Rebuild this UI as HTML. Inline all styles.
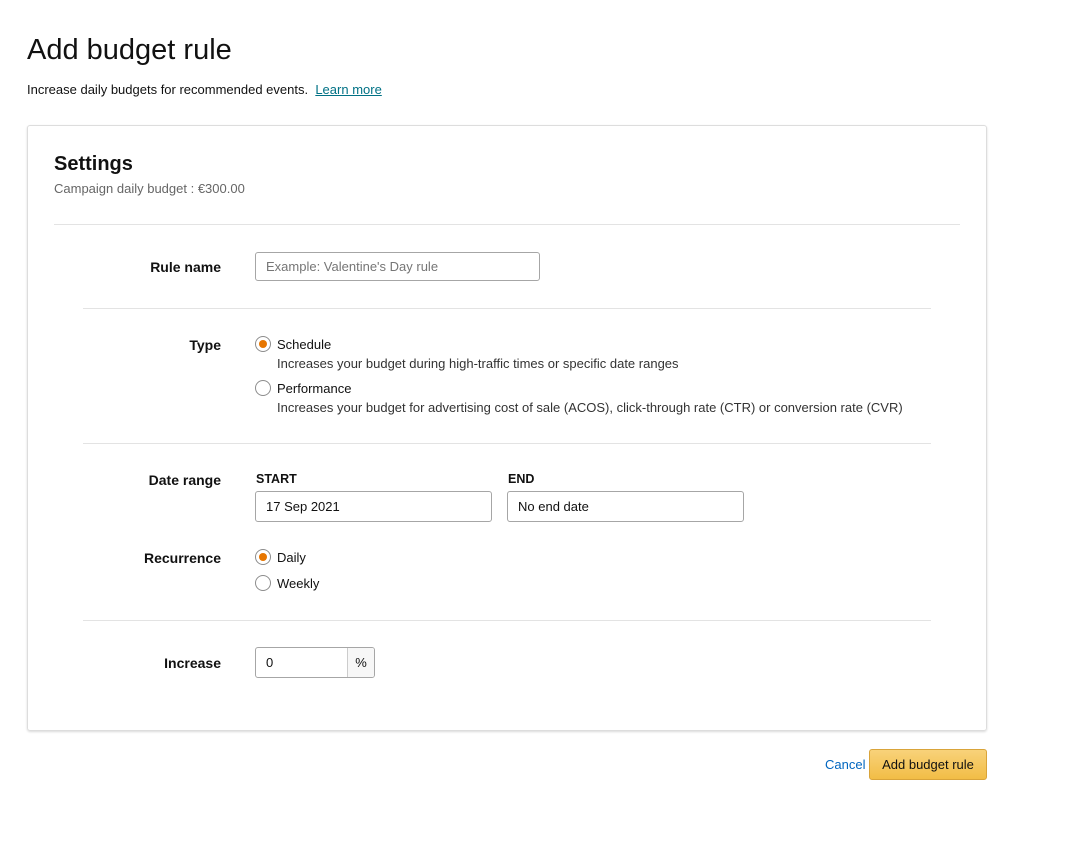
<!DOCTYPE html>
<html><head><style>
body{margin:0;width:1079px;height:858px;background:#fff;font-family:"Liberation Sans",sans-serif;color:#111;position:relative;overflow:hidden}
.a{position:absolute;white-space:nowrap}
.lbl{position:absolute;right:858px;font-weight:bold;font-size:14px}
.inp{position:absolute;border:1px solid #a6a6a6;border-radius:3px;height:29px;box-sizing:border-box;font-size:13px;line-height:27px;padding-left:10px;background:#fff}
.hr{position:absolute;height:1px;background:#e3e3e3}
.r{position:absolute;width:16px;height:16px;border:1px solid #8d8d8d;border-radius:50%;box-sizing:border-box;background:#fff}
.r.on::after{content:"";position:absolute;left:3px;top:3px;width:8px;height:8px;border-radius:50%;background:#e77600}
.t{font-size:13px}
.d{font-size:13px;color:#333}
</style></head><body>
<div class="a" style="left:27px;top:34px;font-size:29px">Add budget rule</div>
<div class="a" style="left:27px;top:82px;font-size:13px">Increase daily budgets for recommended events.&nbsp; <span style="color:#007185;text-decoration:underline">Learn more</span></div>
<div style="position:absolute;left:27px;top:125px;width:958px;height:604px;border:1px solid #ddd;border-radius:3px;box-shadow:0 1px 2px rgba(0,0,0,.15)"></div>
<div class="a" style="left:54px;top:153px;font-size:20px;font-weight:bold">Settings</div>
<div class="a" style="left:54px;top:181px;font-size:13px;color:#666">Campaign daily budget : €300.00</div>
<div class="hr" style="left:54px;width:906px;top:224px"></div>
<div class="lbl" style="top:259px">Rule name</div>
<div class="inp" style="left:255px;top:252px;width:285px;color:#767676">Example: Valentine's Day rule</div>
<div class="hr" style="left:83px;width:848px;top:308px"></div>
<div class="lbl" style="top:337px">Type</div>
<div class="r on" style="left:255px;top:336px"></div>
<div class="a t" style="left:277px;top:337px">Schedule</div>
<div class="a d" style="left:277px;top:356px">Increases your budget during high-traffic times or specific date ranges</div>
<div class="r" style="left:255px;top:380px"></div>
<div class="a t" style="left:277px;top:381px">Performance</div>
<div class="a d" style="left:277px;top:400px">Increases your budget for advertising cost of sale (ACOS), click-through rate (CTR) or conversion rate (CVR)</div>
<div class="hr" style="left:83px;width:848px;top:443px"></div>
<div class="lbl" style="top:472px">Date range</div>
<div class="a" style="left:256px;top:472px;font-size:12.5px;font-weight:bold">START</div>
<div class="a" style="left:508px;top:472px;font-size:12.5px;font-weight:bold">END</div>
<div class="inp" style="left:255px;top:491px;width:237px;height:31px;line-height:29px">17 Sep 2021</div>
<div class="inp" style="left:507px;top:491px;width:237px;height:31px;line-height:29px">No end date</div>
<div class="lbl" style="top:550px">Recurrence</div>
<div class="r on" style="left:255px;top:549px"></div>
<div class="a t" style="left:277px;top:550px">Daily</div>
<div class="r" style="left:255px;top:575px"></div>
<div class="a t" style="left:277px;top:576px">Weekly</div>
<div class="hr" style="left:83px;width:848px;top:620px"></div>
<div class="lbl" style="top:655px">Increase</div>
<div class="inp" style="left:255px;top:647px;width:120px;height:31px;line-height:29px;overflow:hidden">0
<div style="position:absolute;right:0;top:0;width:26px;height:29px;border-left:1px solid #ccc;background:#f7f7f7;font-size:13px;line-height:29px;text-align:center;padding:0">%</div></div>
<div class="a" style="left:825px;top:757px;font-size:13px;color:#0066c0">Cancel</div>
<div style="position:absolute;left:869px;top:749px;width:118px;height:31px;box-sizing:border-box;border:1px solid #d9a43a;border-radius:3px;background:linear-gradient(#f8d27a,#f2bd46);font-size:13px;line-height:29px;text-align:center">Add budget rule</div>
</body></html>
